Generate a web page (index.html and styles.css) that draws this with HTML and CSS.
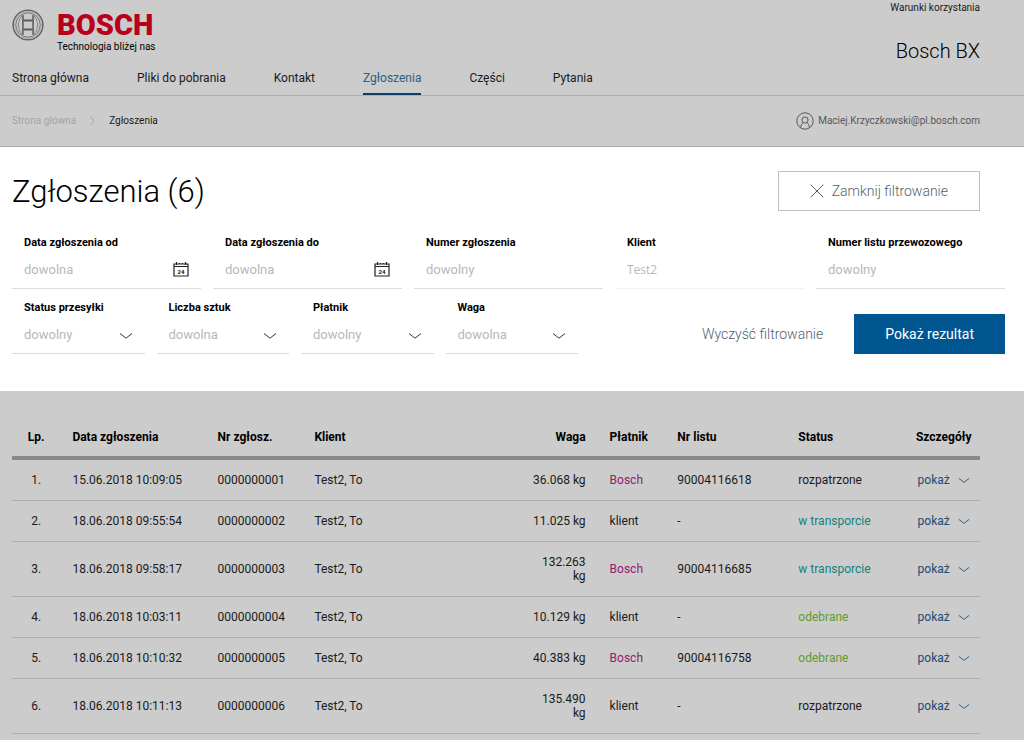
FILE: index.html
```html
<!DOCTYPE html>
<html lang="pl">
<head>
<meta charset="utf-8">
<meta name="viewport" content="width=device-width, initial-scale=1">
<title>Bosch BX - Zgłoszenia</title>
<link rel="stylesheet" href="styles.css">
</head>
<body>
<svg class="sprite" aria-hidden="true">
  <symbol id="chevron" viewBox="0 0 14 8"><path d="M1 1.5 7 6.2 13 1.5" fill="none" stroke="currentColor"/></symbol>
</svg>
<header class="header">
  <div class="brand-row">
    <a class="brand" href="#">
      <svg class="brand-mark" viewBox="0 0 32 32" aria-hidden="true">
        <g fill="none">
          <circle cx="16" cy="16" r="14.8" stroke="#666" stroke-width="1.6"/>
          <circle cx="16" cy="16" r="13.4" stroke="#b4b4b4" stroke-width="1.2"/>
          <circle cx="16" cy="16" r="12.2" stroke="#777"/>
          <path d="M10.5 6.5C7.500 9 6.500 12.500 6.500 16S7.500 23 10.500 25.500zM21.500 6.500C24.500 9 25.500 12.500 25.500 16S24.500 23 21.500 25.500z" stroke="#808080"/>
          <path d="M10.500 11.500h11M10.500 20.500h11" stroke="#5c5c5c" stroke-width="1.8"/>
          <path d="M11 6v20M21 6v20" stroke="#666" stroke-width="1.500"/>
        </g>
      </svg>
      <span class="brand-text"><span class="brand-name">BOSCH</span><span class="brand-claim">Technologia bliżej nas</span></span>
    </a>
    <div class="header-side">
      <a class="terms" href="#">Warunki korzystania</a>
      <span class="app-name">Bosch BX</span>
    </div>
  </div>
  <nav class="nav">
    <a href="#">Strona główna</a>
    <a href="#">Pliki do pobrania</a>
    <a href="#">Kontakt</a>
    <a class="active" href="#">Zgłoszenia</a>
    <a href="#">Części</a>
    <a href="#">Pytania</a>
  </nav>
</header>
<div class="subheader">
  <nav class="breadcrumb" aria-label="Okruszki">
    <a href="#">Strona główna</a>
    <svg class="crumb-arrow" viewBox="0 0 5 10" aria-hidden="true"><path d="M.5.8 4.2 5 .5 9.2" fill="none" stroke="currentColor"/></svg>
    <span>Zgłoszenia</span>
  </nav>
  <a class="user" href="#">
    <svg class="user-icon" viewBox="0 0 18 18" aria-hidden="true"><g fill="none" stroke="currentColor"><circle cx="9" cy="9" r="8.2"/><circle cx="9" cy="8" r="3.1"/><path d="M4.8 15.5c0-2.4 1-4.2 2.6-5M13.2 15.5c0-2.4-1-4.2-2.6-5"/></g></svg>
    Maciej.Krzyczkowski@pl.bosch.com
  </a>
</div>
<main>
  <form class="filters">
    <div class="filters-head">
      <h1>Zgłoszenia (6)</h1>
      <button class="btn btn-outline" type="button">
        <svg class="close-icon" viewBox="0 0 14 14" aria-hidden="true"><path d="M.7.7l12.6 12.6M13.3.7.7 13.3" stroke="currentColor"/></svg>
        Zamknij filtrowanie
      </button>
    </div>
    <div class="fields">
      <div class="field"><label for="from">Data zgłoszenia od</label><div class="control"><input id="from" type="text" placeholder="dowolna"><button class="icon-btn" type="button" aria-label="Kalendarz"><svg class="calendar" viewBox="0 0 16 15"><path d="M1 2h14v12H1zM1 4.500h14M3.500 0v3M12.500 0v3M6.500 1v1.500M9.500 1v1.500" fill="none" stroke="currentColor" stroke-width="1.200"/><text x="8" y="11.500" text-anchor="middle" class="calendar-day">24</text></svg></button></div></div>
      <div class="field"><label for="to">Data zgłoszenia do</label><div class="control"><input id="to" type="text" placeholder="dowolna"><button class="icon-btn" type="button" aria-label="Kalendarz"><svg class="calendar" viewBox="0 0 16 15"><path d="M1 2h14v12H1zM1 4.500h14M3.500 0v3M12.500 0v3M6.500 1v1.500M9.500 1v1.500" fill="none" stroke="currentColor" stroke-width="1.200"/><text x="8" y="11.500" text-anchor="middle" class="calendar-day">24</text></svg></button></div></div>
      <div class="field"><label for="number">Numer zgłoszenia</label><div class="control"><input id="number" type="text" placeholder="dowolny"></div></div>
      <div class="field"><label for="client">Klient</label><div class="control disabled"><input id="client" type="text" value="Test2" disabled></div></div>
      <div class="field"><label for="waybill">Numer listu przewozowego</label><div class="control"><input id="waybill" type="text" placeholder="dowolny"></div></div>
    </div>
    <div class="fields-second">
      <div class="selects">
        <div class="field"><label for="status">Status przesyłki</label><div class="control"><select id="status"><option>dowolny</option></select><svg class="chevron"><use href="#chevron"/></svg></div></div>
        <div class="field"><label for="count">Liczba sztuk</label><div class="control"><select id="count"><option>dowolna</option></select><svg class="chevron"><use href="#chevron"/></svg></div></div>
        <div class="field"><label for="payer">Płatnik</label><div class="control"><select id="payer"><option>dowolny</option></select><svg class="chevron"><use href="#chevron"/></svg></div></div>
        <div class="field"><label for="weight">Waga</label><div class="control"><select id="weight"><option>dowolna</option></select><svg class="chevron"><use href="#chevron"/></svg></div></div>
      </div>
      <div class="actions">
        <button class="btn btn-plain" type="reset">Wyczyść filtrowanie</button>
        <button class="btn btn-primary" type="submit">Pokaż rezultat</button>
      </div>
    </div>
  </form>
  <section class="results">
    <table>
      <colgroup><col class="c-no"><col class="c-date"><col class="c-id"><col class="c-client"><col class="c-weight"><col class="c-payer"><col class="c-waybill"><col class="c-status"><col class="c-more"></colgroup>
      <thead><tr><th class="center">Lp.</th><th>Data zgłoszenia</th><th>Nr zgłosz.</th><th>Klient</th><th class="right">Waga</th><th>Płatnik</th><th>Nr listu</th><th>Status</th><th class="center">Szczegóły</th></tr></thead>
      <tbody>
        <tr><td class="center">1.</td><td>15.06.2018 10:09:05</td><td>0000000001</td><td>Test2, To</td><td class="right">36.068 kg</td><td class="bosch">Bosch</td><td>90004116618</td><td>rozpatrzone</td><td class="center"><a class="more" href="#">pokaż<svg class="chevron-sm"><use href="#chevron"/></svg></a></td></tr>
        <tr><td class="center">2.</td><td>18.06.2018 09:55:54</td><td>0000000002</td><td>Test2, To</td><td class="right">11.025 kg</td><td>klient</td><td>-</td><td class="transit">w transporcie</td><td class="center"><a class="more" href="#">pokaż<svg class="chevron-sm"><use href="#chevron"/></svg></a></td></tr>
        <tr><td class="center">3.</td><td>18.06.2018 09:58:17</td><td>0000000003</td><td>Test2, To</td><td class="right">132.263 kg</td><td class="bosch">Bosch</td><td>90004116685</td><td class="transit">w transporcie</td><td class="center"><a class="more" href="#">pokaż<svg class="chevron-sm"><use href="#chevron"/></svg></a></td></tr>
        <tr><td class="center">4.</td><td>18.06.2018 10:03:11</td><td>0000000004</td><td>Test2, To</td><td class="right">10.129 kg</td><td>klient</td><td>-</td><td class="received">odebrane</td><td class="center"><a class="more" href="#">pokaż<svg class="chevron-sm"><use href="#chevron"/></svg></a></td></tr>
        <tr><td class="center">5.</td><td>18.06.2018 10:10:32</td><td>0000000005</td><td>Test2, To</td><td class="right">40.383 kg</td><td class="bosch">Bosch</td><td>90004116758</td><td class="received">odebrane</td><td class="center"><a class="more" href="#">pokaż<svg class="chevron-sm"><use href="#chevron"/></svg></a></td></tr>
        <tr><td class="center">6.</td><td>18.06.2018 10:11:13</td><td>0000000006</td><td>Test2, To</td><td class="right">135.490 kg</td><td>klient</td><td>-</td><td>rozpatrzone</td><td class="center"><a class="more" href="#">pokaż<svg class="chevron-sm"><use href="#chevron"/></svg></a></td></tr>
      </tbody>
    </table>
  </section>
</main>
</body>
</html>
```
FILE: styles.css
```css
* { box-sizing: border-box; }
body {
  margin: 0;
  background: #ccc;
  color: #1a1a1a;
  font: 12px/16px Roboto, "Open Sans", sans-serif;
}
a { color: inherit; text-decoration: none; }
button, input, select { font: inherit; color: inherit; }
.sprite { position: absolute; width: 0; height: 0; }

.header {
  padding: 0 44px 0 12px;
  border-bottom: 1px solid #b0b0b0;
}
.brand-row { display: flex; justify-content: space-between; height: 64px; }
.brand { display: flex; align-items: flex-start; gap: 13px; padding-top: 9px; }
.brand-mark { width: 32px; height: 32px; }
.brand-text { display: flex; flex-direction: column; }
.brand-name { color: #b8001c; font-size: 29px; line-height: 32px; font-weight: 900; }
.brand-claim { font-size: 10px; line-height: 12px; color: #000; }
.header-side { display: flex; flex-direction: column; align-items: flex-end; }
.terms { font-size: 10px; }
.app-name { font-size: 20px; line-height: 28px; font-weight: 300; margin-top: 21px; color: #000; }
.nav { display: flex; gap: 48px; }
.nav a { height: 31px; padding-top: 6px; }
.nav .active { color: #2b6184; border-bottom: 2px solid #0a3d68; }

.subheader {
  display: flex;
  justify-content: space-between;
  align-items: center;
  height: 51px;
  padding: 0 44px 0 12px;
  border-bottom: 1px solid #aaa;
  font-size: 10px;
}
.breadcrumb { display: flex; align-items: center; gap: 14px; }
.breadcrumb a, .crumb-arrow { color: #a3a4a6; }
.crumb-arrow { width: 5px; height: 10px; }
.user { display: flex; align-items: center; gap: 4px; color: #55585c; }
.user-icon { width: 18px; height: 18px; }

.filters { background: #fff; padding: 24px 19px 37px 12px; }
.filters-head {
  display: flex;
  justify-content: space-between;
  align-items: center;
  padding-right: 25px;
  margin-bottom: 23px;
}
h1 { margin: 0; padding-top: 2px; font-size: 31px; line-height: 38px; font-weight: 300; color: #000; }
.btn {
  display: flex;
  align-items: center;
  justify-content: center;
  height: 40px;
  padding: 0 31px;
  border: 0;
  background: none;
  font-size: 14px;
  font-weight: 300;
  cursor: pointer;
}
.btn-outline { border: 1px solid #bfc0c2; gap: 8px; color: #525f6b; }
.close-icon { width: 14px; height: 14px; }
.btn-plain { color: #525f6b; }
.btn-primary { background: #005691; color: #fff; font-weight: 400; }
.fields { display: grid; grid-template-columns: repeat(5, 1fr); gap: 12px; margin-bottom: 10px; }
.fields-second { display: flex; justify-content: space-between; align-items: flex-end; }
.selects { display: grid; grid-template-columns: repeat(4, 1fr); gap: 12px; flex: 0 0 57%; }
.actions { display: flex; }
.field { min-width: 0; }
.field label { display: block; padding: 2px 0 0 12px; font-size: 11px; line-height: 14px; font-weight: 700; color: #000; }
.control { position: relative; display: flex; align-items: center; height: 39px; border-bottom: 1px solid #dcdcdc; }
.control input, .control select {
  flex: 1;
  min-width: 0;
  height: 38px;
  padding: 0 12px;
  border: 0;
  border-radius: 0;
  background: none;
  appearance: none;
  font-size: 13px;
  color: #b8b8b8;
}
.control select { padding-top: 2px; }
.control input::placeholder { color: #b8b8b8; opacity: 1; }
.control.disabled { border-color: #f2f2f2; }
.control.disabled input { font-family: "Open Sans", sans-serif; font-size: 12px; }
.icon-btn { display: flex; padding: 0 12px; border: 0; background: none; color: #222; }
.calendar { width: 16px; height: 15px; }
.calendar-day { font: 700 6px Roboto, sans-serif; fill: #111; }
.chevron { position: absolute; right: 12px; top: 17px; width: 14px; height: 8px; color: #333; pointer-events: none; }

.results { padding: 28px 44px 28px 12px; }
table { width: 100%; table-layout: fixed; border-collapse: separate; border-spacing: 0; line-height: 14px; }
.c-no { width: 5%; }
.c-date { width: 15%; }
.c-id { width: 10%; }
.c-client { width: 22.5%; }
.c-weight { width: 8%; }
.c-payer { width: 7%; }
.c-waybill { width: 12.5%; }
.c-status { width: 12.5%; }
.c-more { width: 7.5%; }
th { padding: 9px 12px 10px; line-height: 18px; text-align: left; border-bottom: 4px solid #86888b; color: #000; }
td { padding: 13px 12px; border-bottom: 1px solid #b0b0b0; }
th.center, td.center { padding-left: 0; padding-right: 0; text-align: center; }
.right { text-align: right; }
td.bosch { color: #93206f; }
td.transit { color: #14807f; }
td.received { color: #629a2c; }
.more { display: flex; align-items: center; justify-content: center; gap: 8px; color: #1a4b75; }
.chevron-sm { width: 12px; height: 7px; }
```
